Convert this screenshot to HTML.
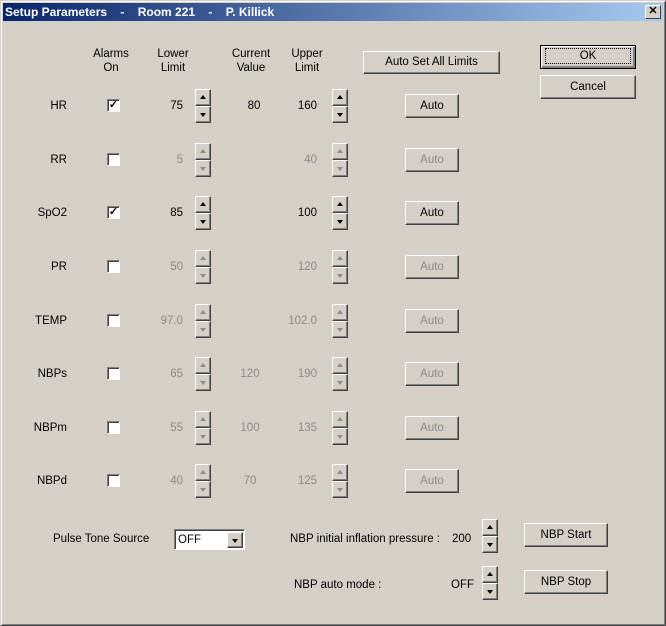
<!DOCTYPE html><html><head><style>
*{margin:0;padding:0;box-sizing:border-box}
body{width:666px;height:626px;overflow:hidden;background:#d4d0c8;font-family:"Liberation Sans",sans-serif;font-size:11.5px;color:#000;position:relative}
.win{position:absolute;left:0;top:0;width:666px;height:626px;border:1px solid;border-color:#d4d0c8 #404040 #404040 #d4d0c8;box-shadow:inset 1px 1px #fff,inset -1px -1px #808080}
.title{position:absolute;left:3px;top:3px;width:660px;height:18px;background:linear-gradient(to right,#0a246a,#a6caf0);color:#fff;font-weight:bold;font-size:12px;line-height:18px;padding-left:2px;white-space:pre}
.x{position:absolute;right:5px;top:5px;width:16px;height:14px;background:#d4d0c8;border:1px solid;border-color:#fff #404040 #404040 #fff;font-size:11px;line-height:11px;text-align:center;color:#000;font-weight:bold}
.a{position:absolute;white-space:nowrap;line-height:14px}
.r{text-align:right}.c{text-align:center}
.g{color:#8a8a8a}
.btn{position:absolute;background:#d4d0c8;border:1px solid;border-color:#fff #404040 #404040 #fff;box-shadow:inset -1px -1px #808080;text-align:center}
.cb{position:absolute;width:13px;height:13px;background:#fff;border:1px solid;border-color:#808080 #fff #fff #808080;box-shadow:inset 1px 1px #404040;font-size:11px;line-height:11px;text-align:center;font-weight:bold}
.sp{position:absolute;width:16px;height:34px}
.sp div{position:absolute;left:0;width:16px;height:17px;background:#d4d0c8;border:1px solid;border-color:#fff #404040 #404040 #fff;box-shadow:inset -1px -1px #808080}
.sp .u{top:0}.sp .d{top:17px}
.sp .u:after{content:"";position:absolute;left:4px;top:5px;border-left:3.5px solid transparent;border-right:3.5px solid transparent;border-bottom:4px solid #000}
.sp .d:after{content:"";position:absolute;left:4px;top:6px;border-left:3.5px solid transparent;border-right:3.5px solid transparent;border-top:4px solid #000}
.sp.dis .u:after{border-bottom-color:#8a8a8a}.sp.dis .d:after{border-top-color:#8a8a8a}
</style></head><body>
<div class="win"></div>
<div class="title">Setup Parameters    -    Room 221    -    P. Killick</div>
<div class="x">✕</div>

<div class="a c" style="left:86px;top:47px;width:50px">Alarms<br>On</div>
<div class="a c" style="left:146px;top:47px;width:54px">Lower<br>Limit</div>
<div class="a c" style="left:222px;top:47px;width:58px">Current<br>Value</div>
<div class="a c" style="left:280px;top:47px;width:54px">Upper<br>Limit</div>
<div class="btn" style="left:363px;top:51px;width:137px;height:23px;line-height:21px">Auto Set All Limits</div>
<div class="btn" style="left:540px;top:45px;width:96px;height:24px;line-height:20px;border:1px solid #000;box-shadow:inset 1px 1px #fff,inset -2px -2px #808080"><span style="display:inline-block;border:1px dotted #000;width:86px;line-height:14px;margin-top:2px">OK</span></div>
<div class="btn" style="left:540px;top:75px;width:96px;height:24px;line-height:22px">Cancel</div>

<!-- HR 106 -->
<div class="a r" style="left:10px;top:99px;width:57px">HR</div>
<div class="cb" style="left:107px;top:99px">✓</div>
<div class="a r" style="left:140px;top:99px;width:43px">75</div>
<div class="sp" style="left:195px;top:89px"><div class="u"></div><div class="d"></div></div>
<div class="a c" style="left:230px;top:99px;width:48px">80</div>
<div class="a r" style="left:270px;top:99px;width:47px">160</div>
<div class="sp" style="left:332px;top:89px"><div class="u"></div><div class="d"></div></div>
<div class="btn" style="left:405px;top:94px;width:54px;height:24px;line-height:22px">Auto</div>

<!-- RR 160 -->
<div class="a r" style="left:10px;top:153px;width:57px">RR</div>
<div class="cb" style="left:107px;top:153px"></div>
<div class="a r g" style="left:140px;top:153px;width:43px">5</div>
<div class="sp dis" style="left:195px;top:143px"><div class="u"></div><div class="d"></div></div>
<div class="a r g" style="left:270px;top:153px;width:47px">40</div>
<div class="sp dis" style="left:332px;top:143px"><div class="u"></div><div class="d"></div></div>
<div class="btn g" style="left:405px;top:148px;width:54px;height:24px;line-height:22px">Auto</div>

<!-- SpO2 213 -->
<div class="a r" style="left:10px;top:206px;width:57px">SpO2</div>
<div class="cb" style="left:107px;top:206px">✓</div>
<div class="a r" style="left:140px;top:206px;width:43px">85</div>
<div class="sp" style="left:195px;top:196px"><div class="u"></div><div class="d"></div></div>
<div class="a r" style="left:270px;top:206px;width:47px">100</div>
<div class="sp" style="left:332px;top:196px"><div class="u"></div><div class="d"></div></div>
<div class="btn" style="left:405px;top:201px;width:54px;height:24px;line-height:22px">Auto</div>

<!-- PR 267 -->
<div class="a r" style="left:10px;top:260px;width:57px">PR</div>
<div class="cb" style="left:107px;top:260px"></div>
<div class="a r g" style="left:140px;top:260px;width:43px">50</div>
<div class="sp dis" style="left:195px;top:250px"><div class="u"></div><div class="d"></div></div>
<div class="a r g" style="left:270px;top:260px;width:47px">120</div>
<div class="sp dis" style="left:332px;top:250px"><div class="u"></div><div class="d"></div></div>
<div class="btn g" style="left:405px;top:255px;width:54px;height:24px;line-height:22px">Auto</div>

<!-- TEMP 321 -->
<div class="a r" style="left:10px;top:314px;width:57px">TEMP</div>
<div class="cb" style="left:107px;top:314px"></div>
<div class="a r g" style="left:140px;top:314px;width:43px">97.0</div>
<div class="sp dis" style="left:195px;top:304px"><div class="u"></div><div class="d"></div></div>
<div class="a r g" style="left:270px;top:314px;width:47px">102.0</div>
<div class="sp dis" style="left:332px;top:304px"><div class="u"></div><div class="d"></div></div>
<div class="btn g" style="left:405px;top:309px;width:54px;height:24px;line-height:22px">Auto</div>

<!-- NBPs 374 -->
<div class="a r" style="left:10px;top:367px;width:57px">NBPs</div>
<div class="cb" style="left:107px;top:367px"></div>
<div class="a r g" style="left:140px;top:367px;width:43px">65</div>
<div class="sp dis" style="left:195px;top:357px"><div class="u"></div><div class="d"></div></div>
<div class="a c g" style="left:226px;top:367px;width:48px">120</div>
<div class="a r g" style="left:270px;top:367px;width:47px">190</div>
<div class="sp dis" style="left:332px;top:357px"><div class="u"></div><div class="d"></div></div>
<div class="btn g" style="left:405px;top:362px;width:54px;height:24px;line-height:22px">Auto</div>

<!-- NBPm 428 -->
<div class="a r" style="left:10px;top:421px;width:57px">NBPm</div>
<div class="cb" style="left:107px;top:421px"></div>
<div class="a r g" style="left:140px;top:421px;width:43px">55</div>
<div class="sp dis" style="left:195px;top:411px"><div class="u"></div><div class="d"></div></div>
<div class="a c g" style="left:226px;top:421px;width:48px">100</div>
<div class="a r g" style="left:270px;top:421px;width:47px">135</div>
<div class="sp dis" style="left:332px;top:411px"><div class="u"></div><div class="d"></div></div>
<div class="btn g" style="left:405px;top:416px;width:54px;height:24px;line-height:22px">Auto</div>

<!-- NBPd 481 -->
<div class="a r" style="left:10px;top:474px;width:57px">NBPd</div>
<div class="cb" style="left:107px;top:474px"></div>
<div class="a r g" style="left:140px;top:474px;width:43px">40</div>
<div class="sp dis" style="left:195px;top:464px"><div class="u"></div><div class="d"></div></div>
<div class="a c g" style="left:226px;top:474px;width:48px">70</div>
<div class="a r g" style="left:270px;top:474px;width:47px">125</div>
<div class="sp dis" style="left:332px;top:464px"><div class="u"></div><div class="d"></div></div>
<div class="btn g" style="left:405px;top:469px;width:54px;height:24px;line-height:22px">Auto</div>

<!-- bottom -->
<div class="a" style="left:53px;top:532px">Pulse Tone Source</div>
<div style="position:absolute;left:174px;top:529px;width:71px;height:21px;background:#fff;border:1px solid;border-color:#808080 #fff #fff #808080;box-shadow:inset 1px 1px #404040">
<div class="a" style="left:3px;top:3px">OFF</div>
<div class="sp" style="left:52px;top:2px;height:16px"><div class="d" style="top:0;height:16px"></div></div>
</div>
<div class="a" style="left:290px;top:532px">NBP initial inflation pressure :</div>
<div class="a" style="left:452px;top:532px">200</div>
<div class="sp" style="left:482px;top:519px"><div class="u"></div><div class="d"></div></div>
<div class="btn" style="left:524px;top:523px;width:84px;height:24px;line-height:22px">NBP Start</div>
<div class="a" style="left:294px;top:578px">NBP auto mode :</div>
<div class="a" style="left:451px;top:578px">OFF</div>
<div class="sp" style="left:482px;top:566px"><div class="u"></div><div class="d"></div></div>
<div class="btn" style="left:524px;top:570px;width:84px;height:24px;line-height:22px">NBP Stop</div>
</body></html>
